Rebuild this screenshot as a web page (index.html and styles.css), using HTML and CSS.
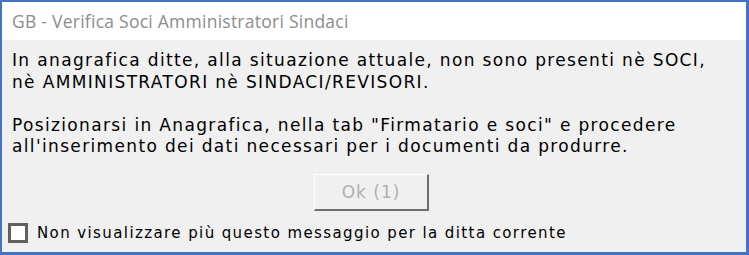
FILE: index.html
```html
<!DOCTYPE html>
<html>
<head>
<meta charset="utf-8">
<link rel="stylesheet" href="styles.css">
</head>
<body>
<div class="window">
  <div class="titlebar">GB - Verifica Soci Amministratori Sindaci</div>
  <div class="content">
    <p class="msg">In anagrafica ditte, alla situazione attuale, non sono presenti nè SOCI,<br>nè AMMINISTRATORI nè SINDACI/REVISORI.</p>
    <p class="msg">Posizionarsi in Anagrafica, nella tab "Firmatario e soci" e procedere<br>all'inserimento dei dati necessari per i documenti da produrre.</p>
    <div class="actions"><button class="btn" disabled>Ok (1)</button></div>
    <label class="check"><span class="box"></span><span>Non visualizzare più questo messaggio per la ditta corrente</span></label>
  </div>
</div>
</body>
</html>
```

FILE: styles.css
```css
html, body { margin: 0; padding: 0; }
body { width: 749px; height: 255px; overflow: hidden; background: #f0f0f0; }
.window {
  box-sizing: border-box;
  width: 749px; height: 255px;
  border-style: solid; border-color: #4472c4;
  border-width: 2px 3px 3px 2px;
  display: flex; flex-direction: column;
  background: #f0f0f0;
}
.titlebar {
  height: 38px; background: #fff;
  font-family: "Open Sans", sans-serif; font-size: 17.5px; letter-spacing: 0.25px; color: #8c8c8c;
  display: flex; align-items: center; padding-left: 10px;
}
.content {
  flex: 1; padding: 10px 10px 0 10px;
  font-family: "DejaVu Sans", sans-serif; font-size: 17px; letter-spacing: 1.35px; color: #000;
}
.msg { margin: 0 0 21.5px 0; line-height: 21.5px; }
.actions { display: flex; justify-content: center; margin-top: -5px; }
.btn {
  width: 115px; height: 37px; box-sizing: border-box;
  background: #f0f0f0; color: #b0b0b0;
  font-family: "DejaVu Sans", sans-serif; font-size: 17px; letter-spacing: 1px;
  border-style: solid; border-width: 1px 2px 2px 1px;
  border-color: #ffffff #6e6e6e #6e6e6e #ffffff;
  margin-right: 5px; padding: 0;
}
.check { display: flex; align-items: center; gap: 9px; margin-top: 12px; margin-left: -4px; font-size: 15px; letter-spacing: 1.4px; }
.box { width: 14px; height: 14px; border: 3px solid #606060; background: #fff; }
```
